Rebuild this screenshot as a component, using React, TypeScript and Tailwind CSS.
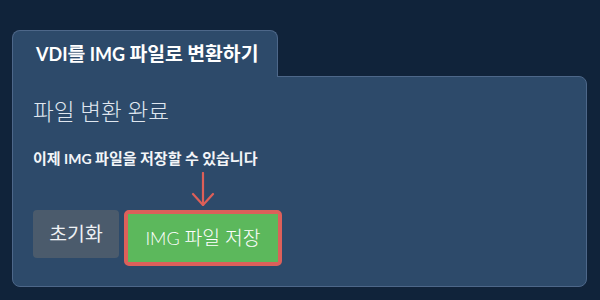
import React from 'react';

const font = { fontFamily: 'Lato, "Noto Sans CJK KR", sans-serif' };

// Hangul runs render a bit larger than the Latin text in the design
function K({ children }: { children: string }) {
  const parts = children.split(/([\uAC00-\uD7A3]+)/);
  return (
    <>
      {parts.map((p, i) =>
        /[\uAC00-\uD7A3]/.test(p) ? (
          <span key={i} className="text-[1.075em]">{p}</span>
        ) : (
          <React.Fragment key={i}>{p}</React.Fragment>
        )
      )}
    </>
  );
}

export default function App() {
  return (
    <div className="w-[600px] h-[300px] bg-[#10233a] pt-[30px] pl-[12px] pr-[13px]" style={font}>
      {/* Tab header */}
      <div className="relative z-10 -mb-px w-[266px] h-[47px] flex items-center pl-[23px] bg-[#2d4a6a] border border-b-0 border-[#4d6789] rounded-t-lg">
        <h1 className="text-[18px] font-bold text-white leading-none"><K>VDI를 IMG 파일로 변환하기</K></h1>
      </div>

      {/* Panel */}
      <div className="bg-[#2d4a6a] border border-[#4d6789] rounded-b-lg rounded-tr-lg pl-[20px] pt-[21px] pb-[20px]">
        <p className="text-[21px] font-light leading-[28px] h-[28px] text-[#dfe6ef]"><K>파일 변환 완료</K></p>
        <p className="mt-[22px] text-[14px] font-bold leading-[20px] h-[20px] text-[#f3f5f8]"><K>이제 IMG 파일을 저장할 수 있습니다</K></p>

        <div className="mt-[4px] ml-[158px] w-[24px] h-[34px]">
          <svg width="24" height="34" viewBox="0 0 24 34" fill="none" stroke="#dd5f58" strokeWidth="2.2" strokeLinecap="round" strokeLinejoin="round">
            <path d="M12 1 V33" />
            <path d="M2 22 L12 33 L22 22" />
          </svg>
        </div>

        <div className="mt-[4px] flex items-start gap-[5px]">
          <button className="h-[48px] w-[86px] bg-[#4b5b6c] rounded-[4px] text-[18px] text-[#eef1f4] font-normal leading-none"><K>초기화</K></button>
          <div className="border-[4px] border-[#dc605a] rounded-[5px]">
            <button className="block h-[48px] w-[150px] bg-[#5cb85c] text-[18px] text-white font-light leading-none"><K>IMG 파일 저장</K></button>
          </div>
        </div>
      </div>
    </div>
  );
}
